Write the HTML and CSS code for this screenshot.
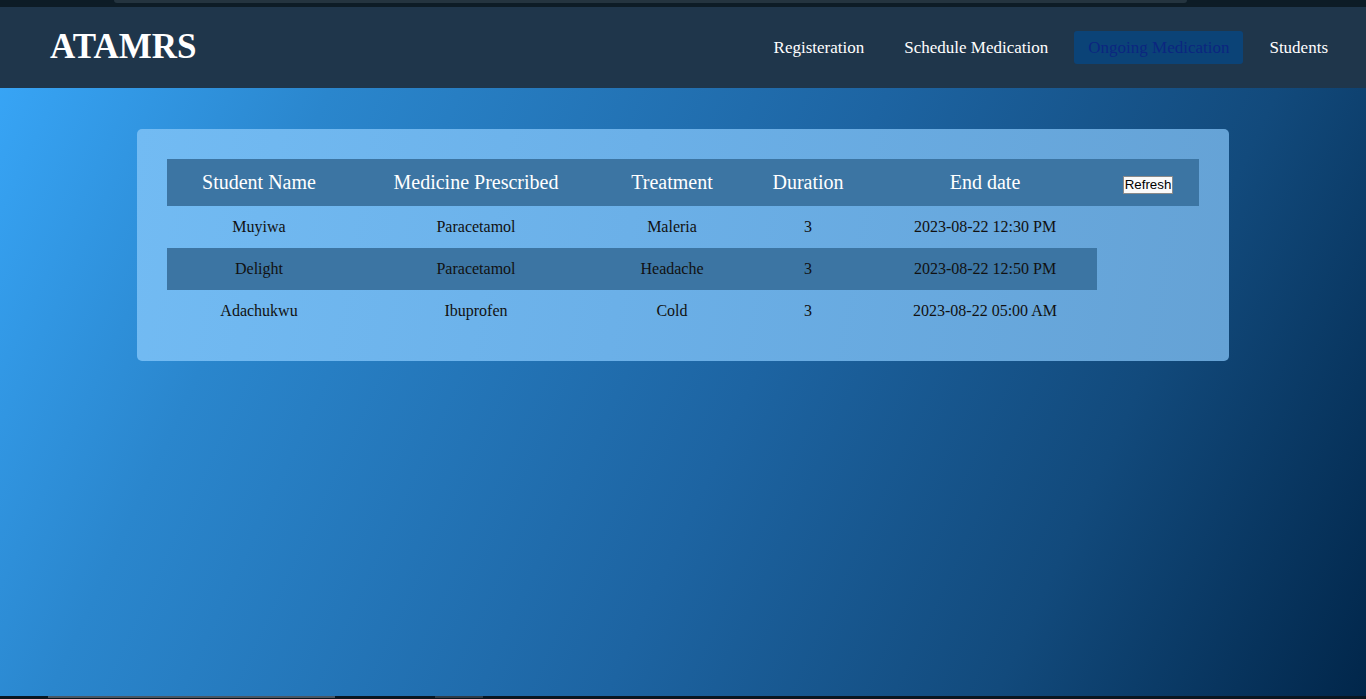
FILE: index.html
```html
<!DOCTYPE html>
<html lang="en">
<head>
<meta charset="utf-8">
<title>ATAMRS</title>
<link rel="stylesheet" href="styles.css">
</head>
<body>
<div class="screen-top"><div class="screen-top-tab"></div></div>
<header class="header">
  <div class="logo">ATAMRS</div>
  <nav class="nav">
    <a class="nav-link" href="#">Registeration</a>
    <a class="nav-link" href="#">Schedule Medication</a>
    <a class="nav-link active" href="#">Ongoing Medication</a>
    <a class="nav-link" href="#">Students</a>
  </nav>
</header>
<main class="main">
  <section class="card">
    <table class="med-table">
      <colgroup>
        <col class="c1"><col class="c2"><col class="c3"><col class="c4"><col class="c5"><col class="c6">
      </colgroup>
      <thead>
        <tr>
          <th>Student Name</th>
          <th>Medicine Prescribed</th>
          <th>Treatment</th>
          <th>Duration</th>
          <th>End date</th>
          <th><button class="refresh">Refresh</button></th>
        </tr>
      </thead>
      <tbody>
        <tr>
          <td>Muyiwa</td><td>Paracetamol</td><td>Maleria</td><td>3</td><td>2023-08-22 12:30 PM</td>
        </tr>
        <tr class="striped">
          <td>Delight</td><td>Paracetamol</td><td>Headache</td><td>3</td><td>2023-08-22 12:50 PM</td>
        </tr>
        <tr>
          <td>Adachukwu</td><td>Ibuprofen</td><td>Cold</td><td>3</td><td>2023-08-22 05:00 AM</td>
        </tr>
      </tbody>
    </table>
  </section>
</main>
<div class="screen-bottom">
  <span class="seg seg-a"></span>
  <span class="seg seg-b"></span>
</div>
</body>
</html>
```

FILE: styles.css
```css
* { box-sizing: border-box; }

html, body {
  margin: 0;
  padding: 0;
  height: 100%;
}

body {
  font-family: "Liberation Serif", "Times New Roman", serif;
  display: flex;
  flex-direction: column;
  min-height: 100vh;
  background: linear-gradient(115deg, #39a8fa 0%, #2a86cd 22%, #1d64a2 55%, #124a7c 78%, #01264a 100%);
  overflow: hidden;
}

.screen-top {
  height: 7px;
  background: #0d1c26;
  flex: none;
}

.screen-top-tab {
  margin: 0 179px 0 114px;
  height: 3px;
  background: #24343f;
  border-radius: 0 0 4px 4px;
}

.header {
  flex: none;
  height: 81px;
  background: #1f364b;
  display: flex;
  align-items: center;
  justify-content: space-between;
  padding: 0 24px 0 50px;
}

.logo {
  font-size: 35px;
  font-weight: bold;
  color: #ffffff;
  margin-top: -2px;
}

.nav {
  display: flex;
  gap: 12px;
  align-items: center;
}

.nav-link {
  font-size: 17px;
  color: #ffffff;
  text-decoration: none;
  padding: 7px 14px;
  border-radius: 3px;
  line-height: 19px;
}

.nav-link.active {
  background: #0b4377;
  color: #0c2680;
}

.main {
  flex: 1;
  padding-top: 41px;
}

.card {
  width: 1092px;
  margin: 0 auto;
  padding: 30px 30px 29px;
  border-radius: 5px;
  background: linear-gradient(100deg, #72bbf3 0%, #6bb0e8 45%, #65a2d5 100%);
}

.med-table {
  width: 100%;
  border-collapse: collapse;
  table-layout: fixed;
}

.c1 { width: 184px; }
.c2 { width: 250px; }
.c3 { width: 142px; }
.c4 { width: 130px; }
.c5 { width: 224px; }
.c6 { width: 102px; }

.med-table th {
  background: #3c75a3;
  color: #ffffff;
  font-weight: normal;
  font-size: 20px;
  padding: 12px 0;
  height: 47px;
  text-align: center;
}

.med-table td {
  font-size: 16px;
  color: #111111;
  text-align: center;
  padding: 12px 0;
  height: 42px;
}

.med-table tr.striped td {
  background: #3c75a3;
}

.refresh {
  font-family: "Liberation Sans", Arial, sans-serif;
  font-size: 13.3px;
  color: #000000;
  background: #fafafa;
  border: 1px solid #8a8a8a;
  padding: 0 1px;
  line-height: 16px;
  margin-top: 3px;
  margin-left: 0;
}

.screen-bottom {
  flex: none;
  height: 3px;
  background: #0a1620;
  position: relative;
}

.seg {
  position: absolute;
  top: 0;
  height: 2px;
  background: #4a5662;
}

.seg-a { left: 48px; width: 287px; }
.seg-b { left: 435px; width: 48px; background: #2f3b46; }
```
